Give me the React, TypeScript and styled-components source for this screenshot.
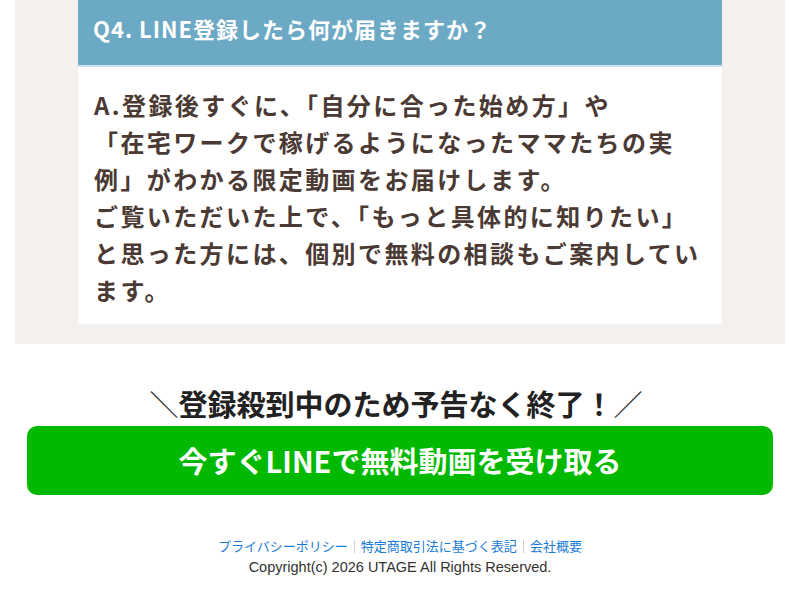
import React from "react";
import styled, { createGlobalStyle } from "styled-components";

const GlobalStyle = createGlobalStyle`
  html, body {
    margin: 0;
    padding: 0;
    background: #ffffff;
    font-family: "Noto Sans CJK JP", "Noto Sans", sans-serif;
  }
`;

const Page = styled.div`
  width: 800px;
  overflow: hidden;
`;

const FaqSection = styled.section`
  margin: 0 15px;
  padding: 0 63px 20px;
  background: #f3f0ed;
`;

const FaqCard = styled.div`
  background: #ffffff;
`;

const Question = styled.h3`
  margin: 0;
  padding: 12px 15px 21px;
  background: #6ca9c5;
  border-bottom: 2px solid #c9e2ee;
  color: #ffffff;
  font-size: 22px;
  font-weight: 700;
  line-height: 32px;
  letter-spacing: 1px;
`;

const Answer = styled.p`
  margin: 0;
  padding: 19px 16px 16px;
  color: #4a3a33;
  font-size: 24px;
  font-weight: 700;
  line-height: 37px;
  letter-spacing: 2.4px;
`;

const CtaSection = styled.section`
  padding: 41px 27px 0;
  text-align: center;
`;

const Tagline = styled.p`
  margin: 0 0 5px;
  color: #222222;
  font-size: 29px;
  font-weight: 700;
  line-height: 36px;
  padding-right: 8px;
`;

const Slash = styled.span`
  font-weight: 400;
  color: #333333;
`;

const LineButton = styled.a`
  display: flex;
  align-items: center;
  justify-content: center;
  height: 69px;
  border-radius: 10px;
  background: #00b900;
  color: #ffffff;
  font-size: 29px;
  font-weight: 700;
  text-decoration: none;
  padding-bottom: 2px;
  box-sizing: border-box;
`;

const Footer = styled.footer`
  padding-top: 42px;
  text-align: center;
`;

const FooterLinks = styled.div`
  display: flex;
  justify-content: center;
  align-items: center;
  font-size: 13px;
  line-height: 18px;
`;

const FooterLink = styled.a`
  color: #1b7bd6;
  text-decoration: none;
`;

const Divider = styled.span`
  display: inline-block;
  width: 1px;
  height: 13px;
  margin: 0 6px;
  background: #cfcfcf;
`;

const Copyright = styled.p`
  margin: 3px 0 0;
  color: #333333;
  font-family: "Liberation Sans", Arial, sans-serif;
  font-size: 14.5px;
  line-height: 18px;
`;

const links = ["プライバシーポリシー", "特定商取引法に基づく表記", "会社概要"];

export default function App() {
  return (
    <Page>
      <GlobalStyle />
      <FaqSection>
        <FaqCard>
          <Question>Q4. LINE登録したら何が届きますか？</Question>
          <Answer>
            A.登録後すぐに、「自分に合った始め方」や
            <br />
            「在宅ワークで稼げるようになったママたちの実例」がわかる限定動画をお届けします。
            <br />
            ご覧いただいた上で、「もっと具体的に知りたい」と思った方には、個別で無料の相談もご案内しています。
          </Answer>
        </FaqCard>
      </FaqSection>

      <CtaSection>
        <Tagline>
          <Slash>＼</Slash>登録殺到中のため予告なく終了！<Slash>／</Slash>
        </Tagline>
        <LineButton href="#">今すぐLINEで無料動画を受け取る</LineButton>
      </CtaSection>

      <Footer>
        <FooterLinks>
          {links.map((label, i) => (
            <React.Fragment key={label}>
              {i > 0 && <Divider />}
              <FooterLink href="#">{label}</FooterLink>
            </React.Fragment>
          ))}
        </FooterLinks>
        <Copyright>Copyright(c) 2026 UTAGE All Rights Reserved.</Copyright>
      </Footer>
    </Page>
  );
}
